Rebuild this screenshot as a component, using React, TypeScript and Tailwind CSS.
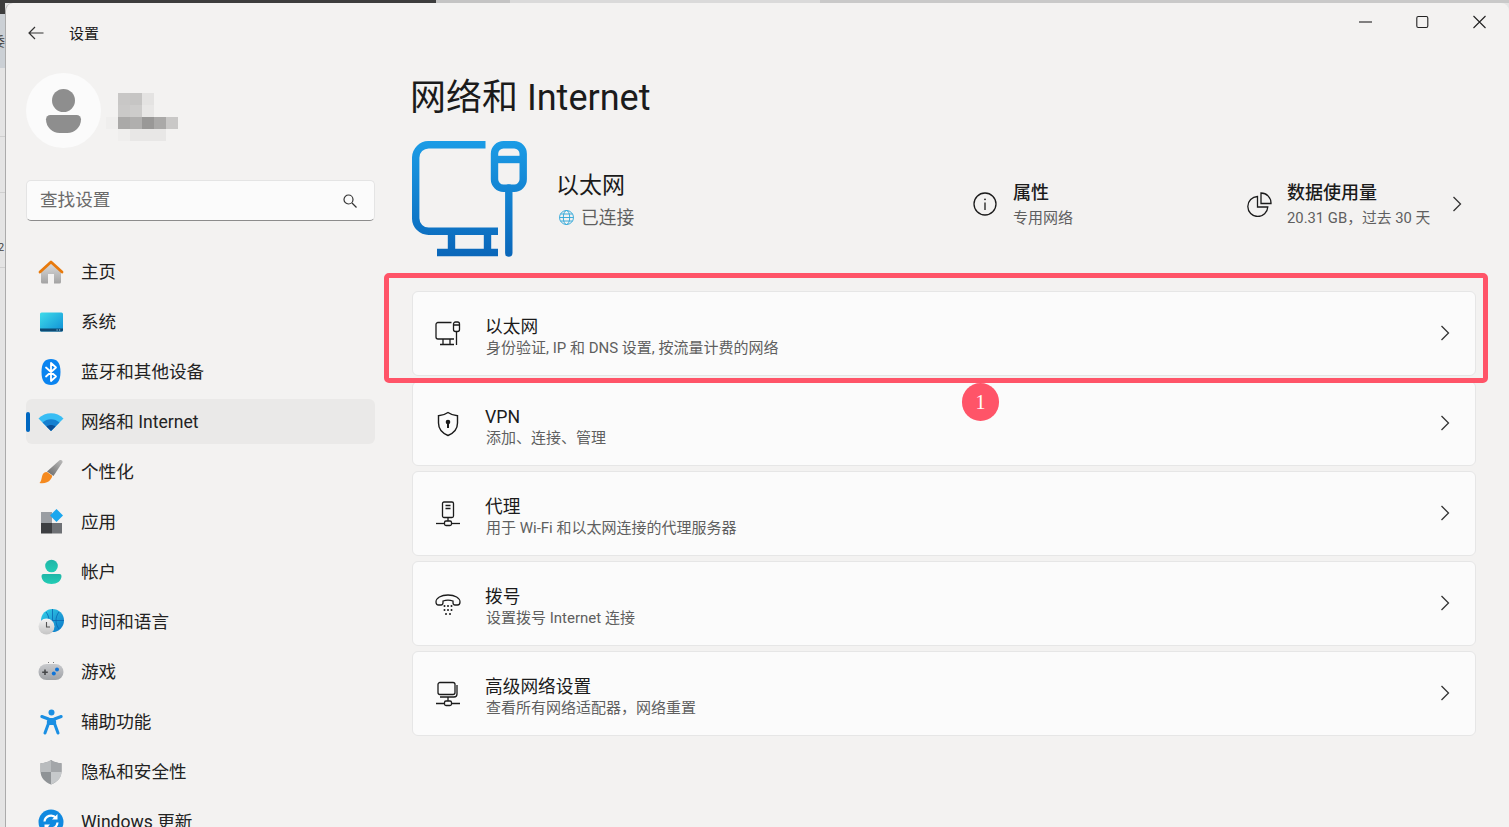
import type { ReactNode } from "react";

const navItems: { label: string; icon: ReactNode; active?: boolean }[] = [
  { label: "主页", icon: <HomeIcon /> },
  { label: "系统", icon: <SystemIcon /> },
  { label: "蓝牙和其他设备", icon: <BluetoothIcon /> },
  { label: "网络和 Internet", icon: <WifiIcon />, active: true },
  { label: "个性化", icon: <BrushIcon /> },
  { label: "应用", icon: <AppsIcon /> },
  { label: "帐户", icon: <AccountIcon /> },
  { label: "时间和语言", icon: <TimeIcon /> },
  { label: "游戏", icon: <GameIcon /> },
  { label: "辅助功能", icon: <AccessIcon /> },
  { label: "隐私和安全性", icon: <ShieldIcon /> },
  { label: "Windows 更新", icon: <UpdateIcon /> },
];

const cards: { title: string; sub: string; icon: ReactNode }[] = [
  { title: "以太网", sub: "身份验证, IP 和 DNS 设置, 按流量计费的网络", icon: <EthernetSmall /> },
  { title: "VPN", sub: "添加、连接、管理", icon: <VpnIcon /> },
  { title: "代理", sub: "用于 Wi-Fi 和以太网连接的代理服务器", icon: <ProxyIcon /> },
  { title: "拨号", sub: "设置拨号 Internet 连接", icon: <DialIcon /> },
  { title: "高级网络设置", sub: "查看所有网络适配器，网络重置", icon: <AdvancedIcon /> },
];

function HomeIcon() {
  return (
    <svg width="26" height="26" viewBox="0 0 26 26">
      <defs>
        <linearGradient id="homeBody" x1="0" y1="0" x2="0" y2="1">
          <stop offset="0" stopColor="#dcdcdc" />
          <stop offset="1" stopColor="#a3a3a3" />
        </linearGradient>
      </defs>
      <path d="M3 12 13 4l10 8v11a1.5 1.5 0 0 1-1.5 1.5H16V15h-6v9.5H4.5A1.5 1.5 0 0 1 3 23Z" fill="url(#homeBody)" />
      <path d="M2 13 13 3l11 10" fill="none" stroke="#e87a0c" strokeWidth="2.8" strokeLinecap="round" strokeLinejoin="round" />
    </svg>
  );
}

function SystemIcon() {
  return (
    <svg width="26" height="26" viewBox="0 0 26 26">
      <defs>
        <linearGradient id="sysScreen" x1="0" y1="0" x2="1" y2="1">
          <stop offset="0" stopColor="#3fdcea" />
          <stop offset="1" stopColor="#0f8fd6" />
        </linearGradient>
      </defs>
      <rect x="2" y="3.5" width="23" height="19" rx="1.5" fill="url(#sysScreen)" />
      <path d="M2 19.5h23V21a1.5 1.5 0 0 1-1.5 1.5h-20A1.5 1.5 0 0 1 2 21Z" fill="#0e4a73" />
      <rect x="18.5" y="20.5" width="1.2" height="1" fill="#9fd8ef" />
      <rect x="21" y="20.5" width="1.2" height="1" fill="#9fd8ef" />
    </svg>
  );
}

function BluetoothIcon() {
  return (
    <svg width="26" height="26" viewBox="0 0 26 26">
      <path d="M13 0c6 0 9.5 3.5 9.5 13S19 26 13 26 3.5 22.5 3.5 13 7 0 13 0Z" fill="#0a84f0" />
      <path d="m8 8.5 10 9-5 4.5V4l5 4.5-10 9" fill="none" stroke="#fff" strokeWidth="1.8" strokeLinecap="round" strokeLinejoin="round" />
    </svg>
  );
}

function WifiIcon() {
  return (
    <svg width="26" height="26" viewBox="0 0 26 26">
      <path d="M.5 9.5C7 2.5 19 2.5 25.5 9.5L13 22Z" fill="#38bdf4" />
      <path d="M4.5 13.5C9 9 17 9 21.5 13.5L13 22Z" fill="#1680d0" />
      <path d="M8.5 17.5C11 15.5 15 15.5 17.5 17.5L13 22Z" fill="#0b4f96" />
    </svg>
  );
}

function BrushIcon() {
  return (
    <svg width="26" height="26" viewBox="0 0 26 26">
      <defs>
        <linearGradient id="brushHandle" x1="0" y1="1" x2="1" y2="0">
          <stop offset="0" stopColor="#666" />
          <stop offset="1" stopColor="#bcbcbc" />
        </linearGradient>
      </defs>
      <path d="M21.5 1.2c1.8-1 3.7.5 2.9 2.3L15.5 17 9 12.5Z" fill="url(#brushHandle)" />
      <path d="M9 13c-3 0-4.5 2-5 4.500C3.500 20 3 22.500 1.500 24c4 .8 9-.2 11-3.500 1.300-2 2-3 1.500-4Z" fill="#f58a1f" />
    </svg>
  );
}

function AppsIcon() {
  return (
    <svg width="26" height="26" viewBox="0 0 26 26">
      <rect x="3" y="3" width="11" height="11" fill="#9a9ea3" />
      <rect x="3" y="14" width="11" height="10.5" fill="#3d3f42" />
      <rect x="14" y="14" width="10" height="10.5" fill="#6e7175" />
      <path d="m18.5 0 6.5 6.5-6.5 6.5L12 6.5Z" fill="#1aa7ee" />
    </svg>
  );
}

function AccountIcon() {
  return (
    <svg width="26" height="26" viewBox="0 0 26 26">
      <defs>
        <linearGradient id="acct" x1="0" y1="0" x2="0" y2="1">
          <stop offset="0" stopColor="#1fb5a7" />
          <stop offset="1" stopColor="#22cdb5" />
        </linearGradient>
      </defs>
      <circle cx="13.5" cy="7" r="6.3" fill="url(#acct)" />
      <path d="M5.5 15h16a2 2 0 0 1 2 2c0 5-4.5 8-10 8s-10-3-10-8a2 2 0 0 1 2-2Z" fill="url(#acct)" />
    </svg>
  );
}

function TimeIcon() {
  return (
    <svg width="26" height="26" viewBox="0 0 26 26">
      <defs>
        <linearGradient id="globeFill" x1="0" y1="0" x2="1" y2="1">
          <stop offset="0" stopColor="#35d3e8" />
          <stop offset="1" stopColor="#0a75c8" />
        </linearGradient>
        <linearGradient id="clockFill" x1="0" y1="0" x2="0" y2="1">
          <stop offset="0" stopColor="#f4f4f4" />
          <stop offset="1" stopColor="#c4c4c4" />
        </linearGradient>
      </defs>
      <circle cx="14.5" cy="11.5" r="11.5" fill="url(#globeFill)" />
      <path d="M3 11.5h23M14.5 0v23M8 3c4 5 4 12 0 17M21 3c-4 5-4 12 0 17" fill="none" stroke="#0b66b0" strokeWidth=".8" />
      <circle cx="8.5" cy="17.5" r="8" fill="url(#clockFill)" />
      <path d="M8.5 13v5H12" fill="none" stroke="#555" strokeWidth="1.1" />
    </svg>
  );
}

function GameIcon() {
  return (
    <svg width="26" height="26" viewBox="0 0 26 26">
      <defs>
        <linearGradient id="pad" x1="0" y1="0" x2="0" y2="1">
          <stop offset="0" stopColor="#c8cacd" />
          <stop offset="1" stopColor="#9fa2a6" />
        </linearGradient>
      </defs>
      <rect x=".5" y="5" width="25" height="16" rx="8" fill="url(#pad)" />
      <path d="M7 10.5V16M4.2 13.2h5.6" stroke="#45474a" strokeWidth="1.6" />
      <circle cx="19" cy="10.5" r="2" fill="#0f74d8" />
      <circle cx="15.8" cy="14.5" r="2" fill="#0f74d8" />
      <path d="M10 3.5h1M15 3.5h1" stroke="#777" strokeWidth="1" />
    </svg>
  );
}

function AccessIcon() {
  return (
    <svg width="26" height="26" viewBox="0 0 26 26">
      <circle cx="13.5" cy="3.5" r="3" fill="#1a8fe3" />
      <path d="M3.8 7.5 10.5 10l-.2 5-3.3 9M23.2 7.5 16.5 10l.2 5 3.3 9" fill="none" stroke="#1a8fe3" strokeWidth="3" strokeLinecap="round" strokeLinejoin="round" />
      <path d="M10 9h7l.5 7h-8Z" fill="#1a8fe3" />
    </svg>
  );
}

function ShieldIcon() {
  return (
    <svg width="26" height="26" viewBox="0 0 26 26">
      <path d="M13 1c3 2.2 6.5 3 10.500 3.300V12c0 6.500-4 11-10.500 13.500C6.500 23 2.500 18.500 2.500 12V4.300C6.500 4 10 3.200 13 1Z" fill="#8f9396" />
      <path d="M13 1v12H2.500V4.300C6.500 4 10 3.200 13 1Z" fill="#b9bcbe" />
      <path d="M13 1v12h10.500V4.300C19.500 4 16 3.200 13 1Z" fill="#a3a6a9" />
      <path d="M13 13h10.500c0 6-4.500 10-10.500 12.500Z" fill="#c6c9cb" />
    </svg>
  );
}

function UpdateIcon() {
  return (
    <svg width="26" height="26" viewBox="0 0 26 26">
      <circle cx="13" cy="13" r="12.5" fill="#1089e0" />
      <path d="M6.5 12.5A6.5 6.5 0 0 1 18 9M19.5 13.5A6.5 6.5 0 0 1 8 17" fill="none" stroke="#fff" strokeWidth="2.2" />
      <path d="M19.5 5v5.5H14ZM6.5 21v-5.5H12Z" fill="#fff" />
    </svg>
  );
}

function EthernetSmall() {
  return (
    <svg width="26" height="26" viewBox="0 0 26 26" fill="none" stroke="#1b1b1b" strokeWidth="1.3">
      <path d="M16.5 1.5H3a2 2 0 0 0-2 2V16a2 2 0 0 0 2 2h16" />
      <path d="M8 18v5.5M15 18v5.5M5 23.5h14" />
      <rect x="18.5" y="1" width="6" height="9.5" rx="2" />
      <path d="M18.5 4h6M21.5 10.5V24" />
    </svg>
  );
}

function VpnIcon() {
  return (
    <svg width="26" height="26" viewBox="0 0 26 26" fill="none" stroke="#1b1b1b" strokeWidth="1.4">
      <path d="M13 1.5c3 2.2 6 3 9.5 3.2V12c0 6-3.5 10-9.5 12.5C7 22 3.5 18 3.5 12V4.7C7 4.5 10 3.700 13 1.500Z" />
      <circle cx="13" cy="11" r="2.3" fill="#1b1b1b" stroke="none" />
      <path d="M13 11v6" strokeWidth="2" />
    </svg>
  );
}

function ProxyIcon() {
  return (
    <svg width="26" height="26" viewBox="0 0 26 26" fill="none" stroke="#1b1b1b" strokeWidth="1.3">
      <rect x="7.5" y="1" width="11" height="15.5" rx="1.5" />
      <path d="M10.5 4.5h5M10.5 7.5h5M13 16.5V20" />
      <path d="M1 22.5h24" />
      <rect x="9.5" y="20" width="7" height="4.5" rx="1.5" fill="#fbfbfb" />
    </svg>
  );
}

function DialIcon() {
  return (
    <svg width="26" height="26" viewBox="0 0 26 26" fill="none" stroke="#1b1b1b" strokeWidth="1.3">
      <path d="M1 11c0-4 5-7 12-7s12 3 12 7c0 2-1 3-2.5 3H20c-1.500 0-2-1-2-2.500V10c-3-1-7-1-10 0v1.500C8 13 7.500 14 6 14H3.500C2 14 1 13 1 11Z" />
      <g fill="#1b1b1b" stroke="none">
        <circle cx="9.5" cy="15" r="1" />
        <circle cx="13" cy="15" r="1" />
        <circle cx="16.5" cy="15" r="1" />
        <circle cx="9.5" cy="19" r="1" />
        <circle cx="13" cy="19" r="1" />
        <circle cx="16.5" cy="19" r="1" />
        <circle cx="11" cy="23" r="1" />
        <circle cx="15" cy="23" r="1" />
      </g>
    </svg>
  );
}

function AdvancedIcon() {
  return (
    <svg width="26" height="26" viewBox="0 0 26 26" fill="none" stroke="#1b1b1b" strokeWidth="1.3">
      <rect x="3" y="1.5" width="17" height="12" rx="2" />
      <path d="M22 4v9a3 3 0 0 1-3 3H5" />
      <path d="M13 16v4M1 22.5h24" />
      <rect x="9.5" y="20" width="7" height="4.5" rx="1.5" fill="#fbfbfb" />
    </svg>
  );
}

function Chevron({ className }: { className?: string }) {
  return (
    <svg className={className} width="10" height="16" viewBox="0 0 10 16" fill="none" stroke="#333" strokeWidth="1.3">
      <path d="m1.5 1 7 7-7 7" />
    </svg>
  );
}

function EthernetLarge() {
  return (
    <svg width="116" height="116" viewBox="0 0 116 116" fill="none" strokeWidth="7.4" className="shrink-0">
      <defs>
        <linearGradient id="ethGrad" gradientUnits="userSpaceOnUse" x1="0" y1="0" x2="0" y2="116">
          <stop offset="0" stopColor="#1b9ce6" />
          <stop offset="1" stopColor="#0a66b9" />
        </linearGradient>
      </defs>
      <g stroke="url(#ethGrad)">
        <path d="M73.5 3.7H17A13 13 0 0 0 3.7 17v60A13 13 0 0 0 17 90.3h69" />
        <path d="M39.5 90v22M75.5 90v22" />
        <path d="M25 111.5H86" />
        <rect x="82.5" y="3.7" width="28.7" height="43.5" rx="9" />
        <path d="M82.5 18.5h28.700" />
        <path d="M96.8 47v65" strokeLinecap="round" />
      </g>
    </svg>
  );
}

function Pixelated() {
  const cells: [number, number, string][] = [
    [12, 0, "#c8c7c6"], [24, 0, "#c6c5c4"], [36, 0, "#e4e3e2"],
    [12, 12, "#cac9c8"], [24, 12, "#cdcccb"], [36, 12, "#e8e7e6"],
    [0, 24, "#efeeed"], [12, 24, "#aaa9a8"], [24, 24, "#b0afae"], [36, 24, "#999897"], [48, 24, "#aaa9a8"], [60, 24, "#c9c8c7"],
    [12, 36, "#efeeed"], [24, 36, "#e8e7e6"], [36, 36, "#e8e7e6"], [48, 36, "#e8e7e6"],
  ];
  return (
    <svg width="72" height="48" viewBox="0 0 72 48" className="ml-[5px] mt-[12px]">
      {cells.map(([x, y, c]) => (
        <rect key={`${x}-${y}`} x={x} y={y} width="12" height="12" fill={c} />
      ))}
    </svg>
  );
}

function Row({ title, sub, icon }: { title: string; sub: string; icon: ReactNode }) {
  return (
    <div className="flex h-[85px] items-center rounded-[6px] border border-[#e6e6e6] bg-[#fbfbfb] pl-[22px] pr-[25px]">
      <div className="flex w-[26px] justify-center">{icon}</div>
      <div className="ml-[25px] mt-[6px] flex flex-col">
        <span className="-ml-[1px] text-[17.7px] leading-[22px] text-[#1b1b1b]">{title}</span>
        <span className="text-[15px] leading-[20px] text-[#5f5f5f]">{sub}</span>
      </div>
      <Chevron className="-mt-[2px] ml-auto" />
    </div>
  );
}

export default function App() {
  return (
    <div className="relative flex h-[827px] w-full flex-col overflow-hidden bg-[#e4e4e4] font-['Roboto','Noto_Sans_CJK_SC',sans-serif]">
      <div className="flex h-[3px] shrink-0">
        <div className="w-[436px] bg-[#3d3d3d]" />
        <div className="w-[74px] bg-[#c4c4c4]" />
        <div className="w-[310px] bg-[#dadada]" />
        <div className="flex-1 bg-[#c9c9c9]" />
      </div>
      <div className="flex min-h-0 flex-1">
        <div className="flex w-[5px] shrink-0 flex-col overflow-hidden text-[13px] leading-none text-[#444]">
          <div className="h-[11px] bg-[#3d3d3d]" />
          <div className="flex h-[54px] items-center bg-[#cbd0d5]">
            <span className="-ml-[8px] shrink-0">委</span>
          </div>
          <div className="h-[69px] border-b border-[#cfcfcf]" />
          <div className="h-[56px] border-b border-[#cfcfcf]" />
          <div className="flex h-[75px] items-end border-b border-[#cfcfcf] pb-[14px]">
            <span className="-ml-[2px] shrink-0 text-[11px]">2</span>
          </div>
        </div>
        <div className="flex min-w-0 flex-1 flex-col rounded-t-[8px] border-l border-[#ababab] bg-[#f3f2f1]">
          <header className="flex h-[60px] shrink-0">
            <div className="flex h-full items-center pl-[22px]">
              <svg width="16" height="14" viewBox="0 0 16 14" fill="none" stroke="#333" strokeWidth="1.2">
                <path d="M15.5 7H1M7 1 1 7l6 6" />
              </svg>
              <span className="ml-[25px] mt-[2px] text-[15px] text-[#1b1b1b]">设置</span>
            </div>
            <div className="ml-auto flex gap-[44px] self-start pr-[23px] pt-[12px]">
              <svg width="13" height="14" viewBox="0 0 13 14" stroke="#222" strokeWidth="1.1">
                <path d="M0 7h13" />
              </svg>
              <svg width="13" height="14" viewBox="0 0 13 14" fill="none" stroke="#222" strokeWidth="1.1">
                <rect x=".8" y="1.5" width="11" height="11" rx="1.5" />
              </svg>
              <svg width="13" height="14" viewBox="0 0 13 14" stroke="#222" strokeWidth="1.1">
                <path d="m.5 1 12 12M12.5 1 .5 13" />
              </svg>
            </div>
          </header>

          <div className="flex min-h-0 flex-1">
            <aside className="w-[369px] shrink-0 overflow-hidden pl-[20px] pt-[10px]">
              <div className="flex items-center">
                <div className="flex size-[75px] flex-col items-center justify-center gap-[3px] rounded-full bg-[#fbfbfb]">
                  <div className="size-[23px] rounded-full bg-[#8e8e8e]" />
                  <div className="h-[18px] w-[35px] rounded-b-[16px] rounded-t-[5px] bg-[#8e8e8e]" />
                </div>
                <Pixelated />
              </div>
              <div className="mt-[32px] flex h-[41px] items-center justify-between rounded-[5px] border border-[#e4e4e4] border-b-[#8c8c8c] bg-[#fbfbfb] pl-[13px] pr-[17px]">
                <span className="text-[17.6px] text-[#6a6a6a]">查找设置</span>
                <svg width="14" height="14" viewBox="0 0 14 14" fill="none" stroke="#333" strokeWidth="1.2">
                  <circle cx="5.5" cy="5.5" r="4.5" />
                  <path d="m9 9 4.5 4.5" />
                </svg>
              </div>
              <nav className="mt-[28px] flex flex-col gap-[5px]">
                {navItems.map((item) => (
                  <div
                    key={item.label}
                    className={`relative flex h-[45px] shrink-0 items-center rounded-[6px] pl-[12px] ${item.active ? "bg-[#eae9e8]" : ""}`}
                  >
                    {item.active && (
                      <span className="absolute left-0 top-[13px] h-[20px] w-[4px] rounded-full bg-[#0067c0]" />
                    )}
                    {item.icon}
                    <span className="ml-[17px] mt-[2px] text-[17.6px] text-[#222]">{item.label}</span>
                  </div>
                ))}
              </nav>
            </aside>

            <main className="min-w-0 flex-1 pl-[37px] pr-[33px] pt-[10px]">
              <h1 className="-ml-[2px] text-[36px] leading-[50px] text-[#1b1b1b]">网络和 Internet</h1>
              <div className="mt-[18px] flex h-[116px] items-center">
                <EthernetLarge />
                <div className="-mt-[1px] ml-[29px] flex flex-col">
                  <span className="-ml-[1px] text-[23px] leading-[38px] text-[#1b1b1b]">以太网</span>
                  <div className="flex items-center gap-[6px]">
                    <svg width="17" height="17" viewBox="0 0 17 17" fill="none" stroke="#2aa5d8" strokeWidth=".9" className="ml-[1px]">
                      <circle cx="8.5" cy="8.5" r="7" />
                      <ellipse cx="8.5" cy="8.5" rx="3.2" ry="7" />
                      <path d="M1.5 8.5h14M2.500 5h12M2.500 12h12" />
                    </svg>
                    <span className="text-[17.7px] leading-[26px] text-[#5f5f5f]">已连接</span>
                  </div>
                </div>
                <div className="ml-auto mr-[14px] mt-[10px] flex items-center">
                  <div className="flex w-[274px] items-center">
                    <svg width="24" height="24" viewBox="0 0 24 24" fill="none" stroke="#1b1b1b" strokeWidth="1.3">
                      <circle cx="12" cy="12" r="11" />
                      <path d="M12 10.5V18" />
                      <circle cx="12" cy="7.3" r=".9" fill="#1b1b1b" stroke="none" />
                    </svg>
                    <div className="ml-[16px] mt-[4px] flex flex-col">
                      <span className="text-[18px] font-medium leading-[24px] text-[#1b1b1b]">属性</span>
                      <span className="text-[15px] leading-[26px] text-[#5f5f5f]">专用网络</span>
                    </div>
                  </div>
                  <div className="flex w-[215px] items-center">
                    <svg width="25" height="25" viewBox="0 0 25 25" fill="none" stroke="#1b1b1b" strokeWidth="1.3" className="shrink-0">
                      <path d="M10.5 4.5a10 10 0 1 0 10.300 10.500H10.500Z" />
                      <path d="M14 1a10 10 0 0 1 10 10.500H14Z" />
                    </svg>
                    <div className="ml-[15px] mt-[4px] flex flex-col">
                      <span className="text-[18px] font-medium leading-[24px] text-[#1b1b1b]">数据使用量</span>
                      <span className="whitespace-nowrap text-[14.8px] leading-[26px] text-[#5f5f5f]">20.31 GB，过去 30 天</span>
                    </div>
                    <Chevron className="ml-auto shrink-0" />
                  </div>
                </div>
              </div>
              <div className="mt-[34px] flex flex-col gap-[5px]">
                {cards.map((card) => (
                  <Row key={card.title} {...card} />
                ))}
              </div>
            </main>
          </div>
        </div>
      </div>

      {/* annotation drawn on top of the screenshot */}
      <div className="absolute left-[384px] top-[273px] h-[110px] w-[1104px] rounded-[5px] border-[5px] border-[#ff5468]" />
      <div className="absolute left-[962px] top-[383px] flex h-[38px] w-[37px] items-center justify-center rounded-full bg-[#ff5468] font-['Liberation_Serif',serif] text-[20px] text-white">
        1
      </div>
    </div>
  );
}
